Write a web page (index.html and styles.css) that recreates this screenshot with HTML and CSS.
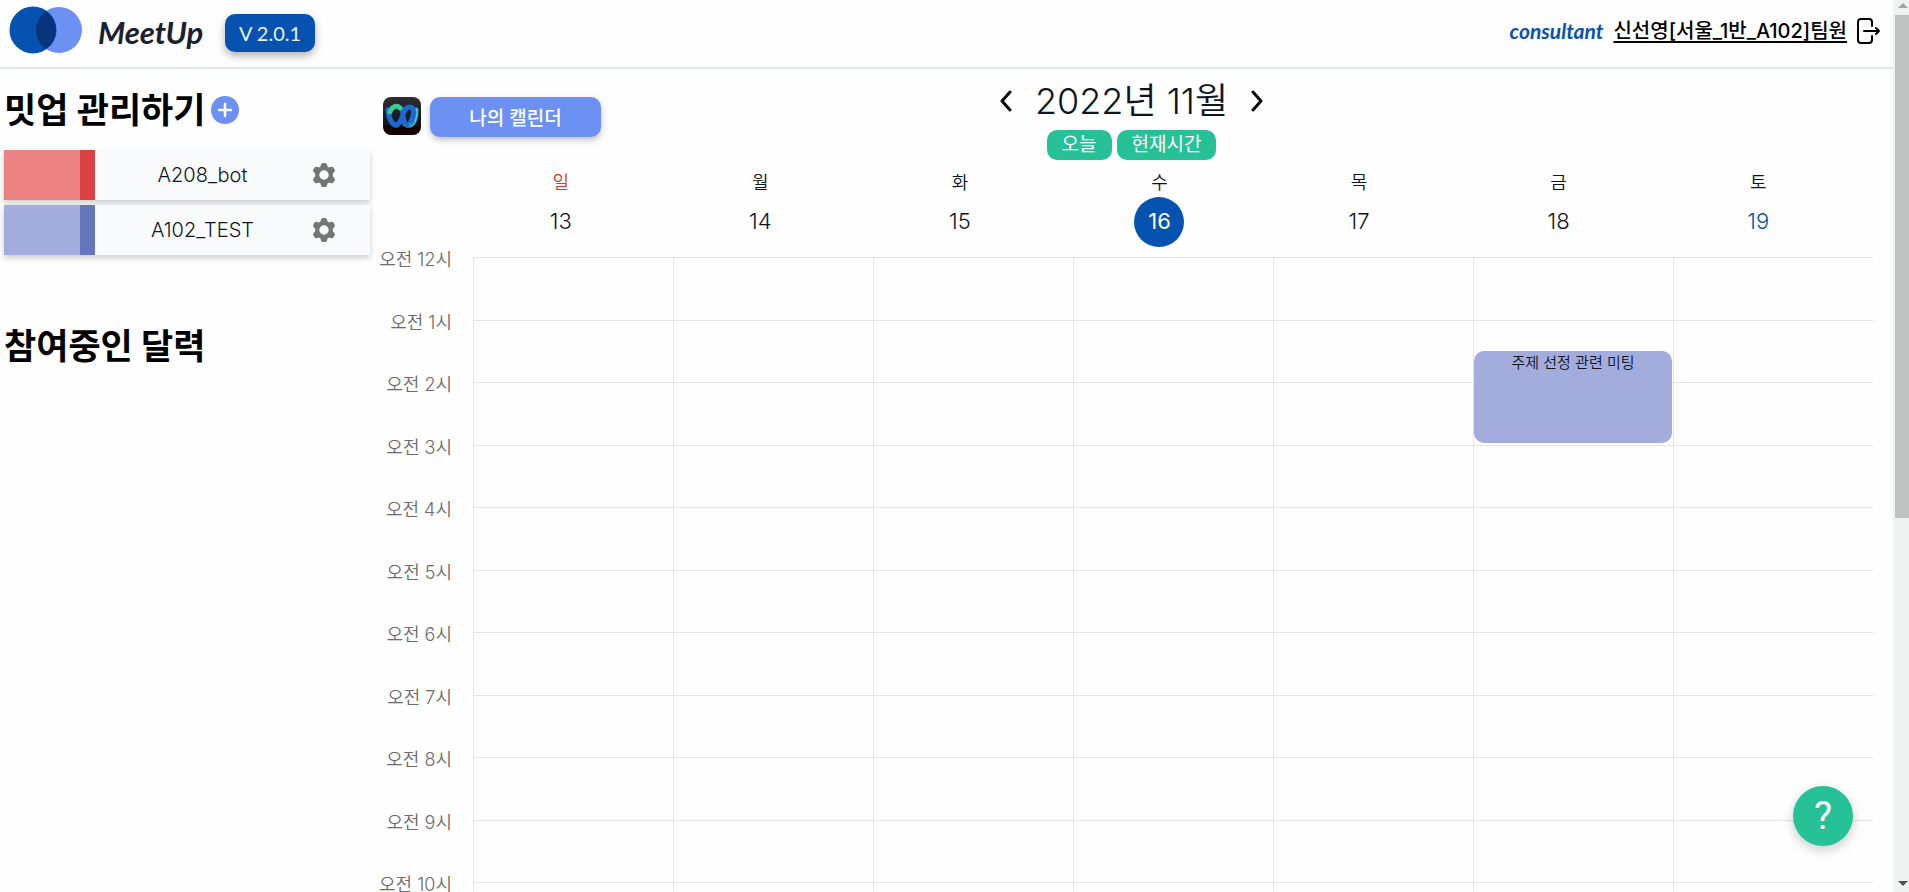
FILE: index.html
```html
<!DOCTYPE html>
<html lang="ko">
<head>
<meta charset="utf-8">
<title>MeetUp</title>
<link rel="stylesheet" href="styles.css">
</head>
<body>
<div class="window">
  <div class="page">
    <header class="header">
      <a class="brand" href="#">
        <svg class="brand-mark" viewBox="0 0 74 48" aria-hidden="true">
          <circle cx="51" cy="24" r="23" fill="#6c91f2"/>
          <circle cx="25" cy="24" r="23.500" fill="#0552b0"/>
          <path d="M38 5a23 23 0 0 1 0 38a23 23 0 0 1 0-38z" fill="#08347e"/>
        </svg>
        <span class="brand-name">MeetUp</span>
      </a>
      <button class="version" type="button">V 2.0.1</button>
      <div class="account">
        <span class="role">consultant</span>
        <a class="user" href="#">신선영[서울_1반_A102]팀원</a>
        <button class="icon-button" type="button" aria-label="로그아웃">
          <svg class="logout" viewBox="0 0 24 26" fill="none" stroke="#000" stroke-width="2" stroke-linecap="round" stroke-linejoin="round" aria-hidden="true">
            <path d="M15 8V4a3 3 0 0 0-3-3H4a3 3 0 0 0-3 3v18a3 3 0 0 0 3 3h8a3 3 0 0 0 3-3v-4M7 13h15M19 10l3 3-3 3"/>
          </svg>
        </button>
      </div>
    </header>

    <div class="body">
      <aside class="sidebar">
        <div class="heading-row">
          <h2 class="heading">밋업 관리하기</h2>
          <button class="icon-button" type="button" aria-label="추가">
            <svg class="add" viewBox="0 0 28 28" aria-hidden="true"><circle cx="14" cy="14" r="14" fill="#6c91f2"/><path d="M14 8v12M8 14h12" stroke="#fff" stroke-width="2.500" stroke-linecap="round"/></svg>
          </button>
        </div>
        <ul class="meetups">
          <li class="meetup meetup-red"><span class="meetup-name">A208_bot</span>
            <button class="icon-button" type="button" aria-label="A208_bot 설정"><svg class="gear" viewBox="0 0 24 24" aria-hidden="true"><path fill="#757575" fill-rule="evenodd" d="M9 1.5Q9.500 0 11 0h2q1.500 0 2 1.500l.5 2 1.500.9 2.200-.7q1.500-.3 2.300 1l1.200 2q.7 1.300-.4 2.400L20.800 10.800v2.400l1.500 1.700q1.100 1.100.4 2.400l-1.200 2q-.8 1.300-2.300 1l-2.200-.7-1.500.9-.5 2q-.5 1.500-2 1.500h-2q-1.500 0-2-1.500l-.5-2-1.500-.9-2.200.7q-1.500.3-2.300-1l-1.200-2q-.7-1.300.4-2.400l1.500-1.700v-2.400L1.700 9.100Q.6 8 1.300 6.700l1.200-2q.8-1.300 2.300-1l2.200.7 1.500-.9zM12 7.300a4.700 4.700 0 1 0 0 9.400a4.700 4.700 0 0 0 0-9.400z"/></svg></button>
          </li>
          <li class="meetup meetup-blue"><span class="meetup-name">A102_TEST</span>
            <button class="icon-button" type="button" aria-label="A102_TEST 설정"><svg class="gear" viewBox="0 0 24 24" aria-hidden="true"><path fill="#757575" fill-rule="evenodd" d="M9 1.5Q9.500 0 11 0h2q1.500 0 2 1.500l.5 2 1.500.9 2.200-.7q1.500-.3 2.300 1l1.200 2q.7 1.300-.4 2.400L20.800 10.800v2.400l1.500 1.700q1.100 1.100.4 2.400l-1.200 2q-.8 1.300-2.300 1l-2.200-.7-1.500.9-.5 2q-.5 1.500-2 1.500h-2q-1.500 0-2-1.500l-.5-2-1.500-.9-2.200.7q-1.500.3-2.300-1l-1.200-2q-.7-1.300.4-2.400l1.500-1.700v-2.400L1.700 9.100Q.6 8 1.300 6.700l1.200-2q.8-1.300 2.300-1l2.200.7 1.500-.9zM12 7.300a4.700 4.700 0 1 0 0 9.400a4.700 4.700 0 0 0 0-9.400z"/></svg></button>
          </li>
        </ul>
        <h2 class="heading">참여중인 달력</h2>
      </aside>

      <main class="calendar">
        <div class="toolbar">
          <div class="toolbar-left">
            <a href="#" class="webex" aria-label="Webex">
              <svg viewBox="0 0 38 38" aria-hidden="true">
                <defs><linearGradient id="tile" x2="0" y2="1"><stop offset="0" stop-color="#2b2c34"/><stop offset=".7" stop-color="#15161c"/><stop offset=".8" stop-color="#140000"/><stop offset="1" stop-color="#140000"/></linearGradient></defs>
                <rect width="38" height="38" rx="8" fill="url(#tile)"/>
                <g fill="none" stroke-width="5" stroke-linecap="round">
                  <path d="M5 13c1 9 4 15 9 15" stroke="#0c4da2"/>
                  <path d="M27 28c4-1 6-8 6-15" stroke="#45b9dc"/>
                  <path d="M22 27q4 3 7-2" stroke="#27a3bb"/>
                  <path d="M12 28c9 0 6-18 15-18 5 0 4 10 1 14M19 12c2 6 0 14 5 16M5 13c1 9 4 15 9 15" stroke="#1d69d2"/>
                  <path d="M7 15c2-6 7-7 10-4" stroke="#3ccb8c"/>
                </g>
              </svg>
            </a>
            <button class="my-calendar" type="button">나의 캘린더</button>
          </div>
          <div class="toolbar-center">
            <div class="month">
              <button class="icon-button" type="button" aria-label="이전 주"><svg class="chevron" viewBox="0 0 14 22" aria-hidden="true"><path d="M11 2L3 11l8 9"/></svg></button>
              <h1 class="month-title">2022년 11월</h1>
              <button class="icon-button" type="button" aria-label="다음 주"><svg class="chevron" viewBox="0 0 14 22" aria-hidden="true"><path d="M3 2l8 9-8 9"/></svg></button>
            </div>
            <div class="jump">
              <button class="chip" type="button">오늘</button>
              <button class="chip" type="button">현재시간</button>
            </div>
          </div>
        </div>

        <div class="days">
          <div class="day sunday"><span>일</span><span class="date">13</span></div>
          <div class="day"><span>월</span><span class="date">14</span></div>
          <div class="day"><span>화</span><span class="date">15</span></div>
          <div class="day"><span>수</span><span class="date today">16</span></div>
          <div class="day"><span>목</span><span class="date">17</span></div>
          <div class="day"><span>금</span><span class="date">18</span></div>
          <div class="day saturday"><span>토</span><span class="date">19</span></div>
        </div>

        <div class="schedule">
          <div class="hours">
            <span>오전 12시</span><span>오전 1시</span><span>오전 2시</span><span>오전 3시</span>
            <span>오전 4시</span><span>오전 5시</span><span>오전 6시</span><span>오전 7시</span>
            <span>오전 8시</span><span>오전 9시</span><span>오전 10시</span>
          </div>
          <div class="grid">
            <div class="lines"><i></i><i></i><i></i><i></i><i></i><i></i><i></i><i></i><i></i><i></i><i></i><i></i></div>
            <div class="column"></div><div class="column"></div><div class="column"></div>
            <div class="column"></div><div class="column"></div>
            <div class="column"><a class="event" href="#">주제 선정 관련 미팅</a></div>
            <div class="column"></div>
          </div>
        </div>
      </main>
    </div>
    <button class="help" type="button" aria-label="도움말">?</button>
  </div>
  <div class="scrollbar" aria-hidden="true">
    <svg class="scroll-arrow" viewBox="0 0 10 5"><path d="M0 5l5-5 5 5z" fill="#a3a3a3"/></svg>
    <div class="scroll-track"><div class="scroll-thumb"></div></div>
    <svg class="scroll-arrow" viewBox="0 0 10 5"><path d="M0 0h10L5 5z" fill="#505050"/></svg>
  </div>
</div>
</body>
</html>
```
FILE: styles.css
```css
* { box-sizing: border-box; }

body {
  margin: 0;
  background: #fefefe;
  color: #0f151e;
  font-family: Inter, "Noto Sans CJK KR", sans-serif;
}

button {
  border: 0;
  padding: 0;
  font-family: inherit;
  cursor: pointer;
}

a { color: inherit; text-decoration: none; }
svg { display: block; }

.icon-button { background: none; }

.window {
  display: flex;
  height: 100vh;
  overflow: hidden;
}

.page {
  position: relative;
  display: flex;
  flex-direction: column;
  flex: 1;
  min-width: 0;
}

/* Header */
.header {
  display: flex;
  align-items: center;
  flex: none;
  height: 69px;
  padding: 0 12px 8px 8px;
  border-bottom: 2px solid #e1e7ec;
}

.brand {
  display: flex;
  align-items: center;
  gap: 16px;
}

.brand-mark { width: 74px; height: 48px; }

.brand-name {
  width: 112px;
  padding-top: 4px;
  color: #1b202c;
  font: italic 700 31px/40px Lato, sans-serif;
}

.version {
  width: 90px;
  height: 38px;
  margin: 6px 0 0 15px;
  border-radius: 10px;
  background: #0552b0;
  box-shadow: 0 4px 8px rgba(0, 0, 0, .3);
  color: #e9f0fa;
  font: 20px/36px Lato, sans-serif;
}

.account {
  display: flex;
  align-items: center;
  gap: 10px;
  margin-left: auto;
  padding-top: 2px;
}

.role {
  color: #0552b0;
  font: italic 700 21px/24px Lato, sans-serif;
}

.user {
  color: #000;
  font-size: 20px;
  font-weight: 500;
  line-height: 28px;
  text-decoration: underline;
  text-decoration-thickness: 2px;
  text-underline-offset: 3px;
}

.logout { width: 24px; height: 26px; }

/* Sidebar */
.body {
  display: flex;
  flex: 1;
  min-height: 0;
}

.sidebar {
  flex: none;
  width: 374px;
  padding: 16px 4px;
}

.heading-row {
  display: flex;
  align-items: center;
  gap: 5px;
}

.heading {
  margin: 0;
  color: #000;
  font-size: 35px;
  font-weight: 700;
  line-height: 50px;
}

.add { width: 28px; height: 28px; }

.meetups {
  display: grid;
  gap: 5px;
  margin: 15px 0 66px;
  padding: 0;
  list-style: none;
}

.meetup {
  display: flex;
  align-items: center;
  height: 50px;
  padding-right: 34px;
  border-left: 76px solid;
  background: #f9fafc;
  box-shadow: 0 3px 6px rgba(0, 0, 0, .2);
}

.meetup::before {
  width: 15px;
  height: 100%;
  content: "";
}

.meetup-red { border-color: #ed8282; }
.meetup-red::before { background: #d94343; }
.meetup-blue { border-color: #a3addd; }
.meetup-blue::before { background: #6576be; }

.meetup-name {
  flex: 1;
  padding-right: 2px;
  font-size: 20px;
  font-weight: 300;
  text-align: center;
}

.gear { width: 24px; height: 24px; }

/* Calendar */
.calendar {
  display: flex;
  flex-direction: column;
  flex: 1;
  min-width: 0;
}

.toolbar {
  display: grid;
  grid-template-columns: 1fr auto 1fr;
  flex: none;
  height: 98px;
  padding: 10px 4px 0 0;
}

.toolbar-left {
  display: flex;
  gap: 9px;
  padding: 18px 0 0 9px;
}

.webex { width: 38px; height: 38px; }

.my-calendar {
  width: 171px;
  height: 40px;
  padding-bottom: 2px;
  border-radius: 10px;
  background: #6c91f2;
  box-shadow: 0 3px 6px rgba(0, 0, 0, .25);
  color: #fff;
  font-size: 19px;
  font-weight: 500;
}

.month {
  display: flex;
  align-items: center;
  gap: 22px;
  height: 44px;
}

.month-title {
  margin: 0;
  font-size: 36px;
  font-weight: 350;
  line-height: 44px;
}

.chevron {
  width: 14px;
  height: 22px;
  fill: none;
  stroke: #000;
  stroke-width: 3;
  stroke-linecap: round;
  stroke-linejoin: round;
}

.jump {
  display: flex;
  justify-content: center;
  gap: 5px;
  padding-top: 7px;
}

.chip {
  height: 30px;
  padding: 0 15px;
  border-radius: 10px;
  background: #27c197;
  color: #fff;
  font-size: 19px;
  font-weight: 400;
  line-height: 30px;
}

.days {
  display: grid;
  grid-template-columns: repeat(7, 1fr);
  flex: none;
  height: 90px;
  padding: 2px 35px 0 87px;
}

.day {
  display: flex;
  flex-direction: column;
  align-items: center;
  font-size: 18px;
  font-weight: 350;
  line-height: 28px;
}

.sunday > span:first-child { color: #d9372f; }
.saturday .date { color: #0552b0; }

.date {
  width: 50px;
  height: 50px;
  border-radius: 50%;
  font-size: 22px;
  line-height: 48px;
  text-align: center;
}

.today {
  background: #0552b0;
  color: #fff;
  font-weight: 400;
}

.schedule {
  display: grid;
  grid-template-columns: 99px 1fr;
  flex: none;
  height: 750px;
  padding-right: 20px;
}

.hours {
  display: grid;
  grid-template-rows: repeat(12, 1fr);
  padding-right: 21px;
  color: #6b6b6b;
  font-size: 18px;
  font-weight: 350;
  line-height: 24px;
  text-align: right;
}

.hours span { margin-top: -9px; }

.grid {
  position: relative;
  display: grid;
  grid-template-columns: repeat(7, 1fr);
}

.lines {
  position: absolute;
  inset: 0;
  display: grid;
  grid-template-rows: repeat(12, 1fr);
}

.lines i { border-top: 1px solid #e3e5e8; }

.column {
  position: relative;
  border-left: 1px solid #e3e5e8;
}

.event {
  position: absolute;
  top: 94px;
  right: 1px;
  left: 0;
  height: 92px;
  border-radius: 10px;
  background: #a3addd;
  font-size: 15px;
  font-weight: 350;
  line-height: 24px;
  text-align: center;
}

.help {
  position: absolute;
  right: 40px;
  bottom: 46px;
  width: 60px;
  height: 60px;
  border-radius: 50%;
  background: #27c197;
  box-shadow: 0 4px 12px rgba(0, 0, 0, .2);
  color: #fff;
  font: 38px/60px Roboto, sans-serif;
}

/* Scrollbar */
.scrollbar {
  display: flex;
  flex-direction: column;
  align-items: flex-end;
  flex: none;
  width: 16px;
  padding: 3px 0 6px;
  background: #f0f2f1;
}

.scroll-arrow {
  flex: none;
  width: 10px;
  height: 5px;
  margin-right: 1px;
}

.scroll-track {
  flex: 1;
  width: 14px;
  padding: 7px 0;
}

.scroll-thumb {
  height: 58.5%;
  background: #c0c2c1;
}
```
